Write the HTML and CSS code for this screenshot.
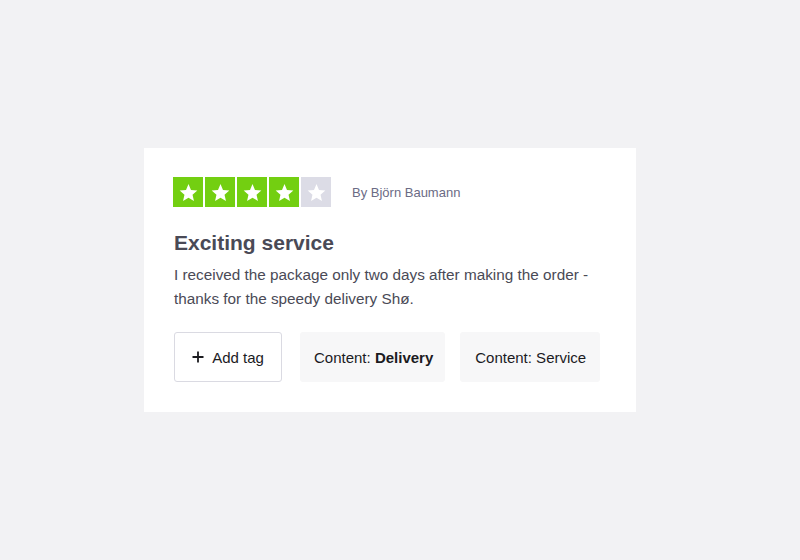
FILE: index.html
```html
<!DOCTYPE html>
<html>
<head>
<meta charset="utf-8">
<link rel="stylesheet" href="styles.css">
</head>
<body>
<div class="page">
  <div class="card">
    <div class="head">
      <div class="stars">
        <span class="star on"><svg viewBox="0 0 24 24"><path d="M12 3.2l2.6 6.1 6.6.6-5 4.4 1.5 6.5L12 17.4l-5.7 3.4 1.5-6.5-5-4.4 6.6-.6z"/></svg></span>
        <span class="star on"><svg viewBox="0 0 24 24"><path d="M12 3.2l2.6 6.1 6.6.6-5 4.4 1.5 6.5L12 17.4l-5.7 3.4 1.5-6.5-5-4.4 6.6-.6z"/></svg></span>
        <span class="star on"><svg viewBox="0 0 24 24"><path d="M12 3.2l2.6 6.1 6.6.6-5 4.4 1.5 6.5L12 17.4l-5.7 3.4 1.5-6.5-5-4.4 6.6-.6z"/></svg></span>
        <span class="star on"><svg viewBox="0 0 24 24"><path d="M12 3.2l2.6 6.1 6.6.6-5 4.4 1.5 6.5L12 17.4l-5.7 3.4 1.5-6.5-5-4.4 6.6-.6z"/></svg></span>
        <span class="star off"><svg viewBox="0 0 24 24"><path d="M12 3.2l2.6 6.1 6.6.6-5 4.4 1.5 6.5L12 17.4l-5.7 3.4 1.5-6.5-5-4.4 6.6-.6z"/></svg></span>
      </div>
      <span class="author">By Björn Baumann</span>
    </div>
    <h2 class="title">Exciting service</h2>
    <p class="body">I received the package only two days after making the order - thanks for the speedy delivery Shø.</p>
    <div class="tags">
      <button class="add"><svg class="plus" viewBox="0 0 12 12"><path d="M6 0.5v11M0.5 6h11"/></svg>Add tag</button>
      <span class="tag first">Content: <b>Delivery</b></span>
      <span class="tag second">Content: Service</span>
    </div>
  </div>
</div>
</body>
</html>
```
FILE: styles.css
```css
html, body {
  margin: 0;
  padding: 0;
  background: #f2f2f4;
  font-family: "Liberation Sans", Arial, sans-serif;
}
.page {
  width: 800px;
  height: 560px;
  display: flex;
  align-items: flex-start;
  justify-content: flex-start;
}
.card {
  margin: 148px 0 0 144px;
  width: 492px;
  height: 264px;
  box-sizing: border-box;
  background: #fff;
  padding: 29px 30px 0 29px;
}
.head {
  display: flex;
  align-items: center;
}
.stars {
  display: flex;
  gap: 2px;
}
.star {
  width: 30px;
  height: 30px;
  display: flex;
  align-items: center;
  justify-content: center;
}
.star svg {
  width: 23px;
  height: 23px;
  fill: #fff;
}
.star.on { background: #73cf11; }
.star.off { background: #dcdce6; }
.author {
  margin-left: 21px;
  font-size: 13px;
  color: #6b6b85;
}
.title {
  margin: 24px 0 0 1px;
  font-size: 21px;
  font-weight: bold;
  color: #4a4a56;
  line-height: 24px;
}
.body {
  margin: 8px 0 0 1px;
  font-size: 15.3px;
  line-height: 24px;
  color: #4a4a56;
}
.tags {
  margin-top: 21px;
  margin-left: 1px;
  display: flex;
}
.add {
  width: 108px;
  height: 50px;
  box-sizing: border-box;
  border: 1px solid #dadae2;
  border-radius: 3px;
  background: #fff;
  font-family: inherit;
  font-size: 15px;
  color: #1b1b1f;
  display: flex;
  align-items: center;
  justify-content: center;
  gap: 8px;
  padding: 0;
}
.plus {
  width: 12px;
  height: 12px;
  stroke: #1b1b1f;
  stroke-width: 1.8;
  fill: none;
}
.tag {
  height: 50px;
  background: #f7f7f8;
  border-radius: 3px;
  font-size: 15px;
  color: #1b1b1f;
  display: flex;
  align-items: center;
  white-space: pre;
}
.tag.first { margin-left: 18px; padding: 0 12px 0 14px; }
.tag.second { margin-left: 15px; padding: 0 14px 0 15px; }
.tag b { font-weight: bold; }
```
